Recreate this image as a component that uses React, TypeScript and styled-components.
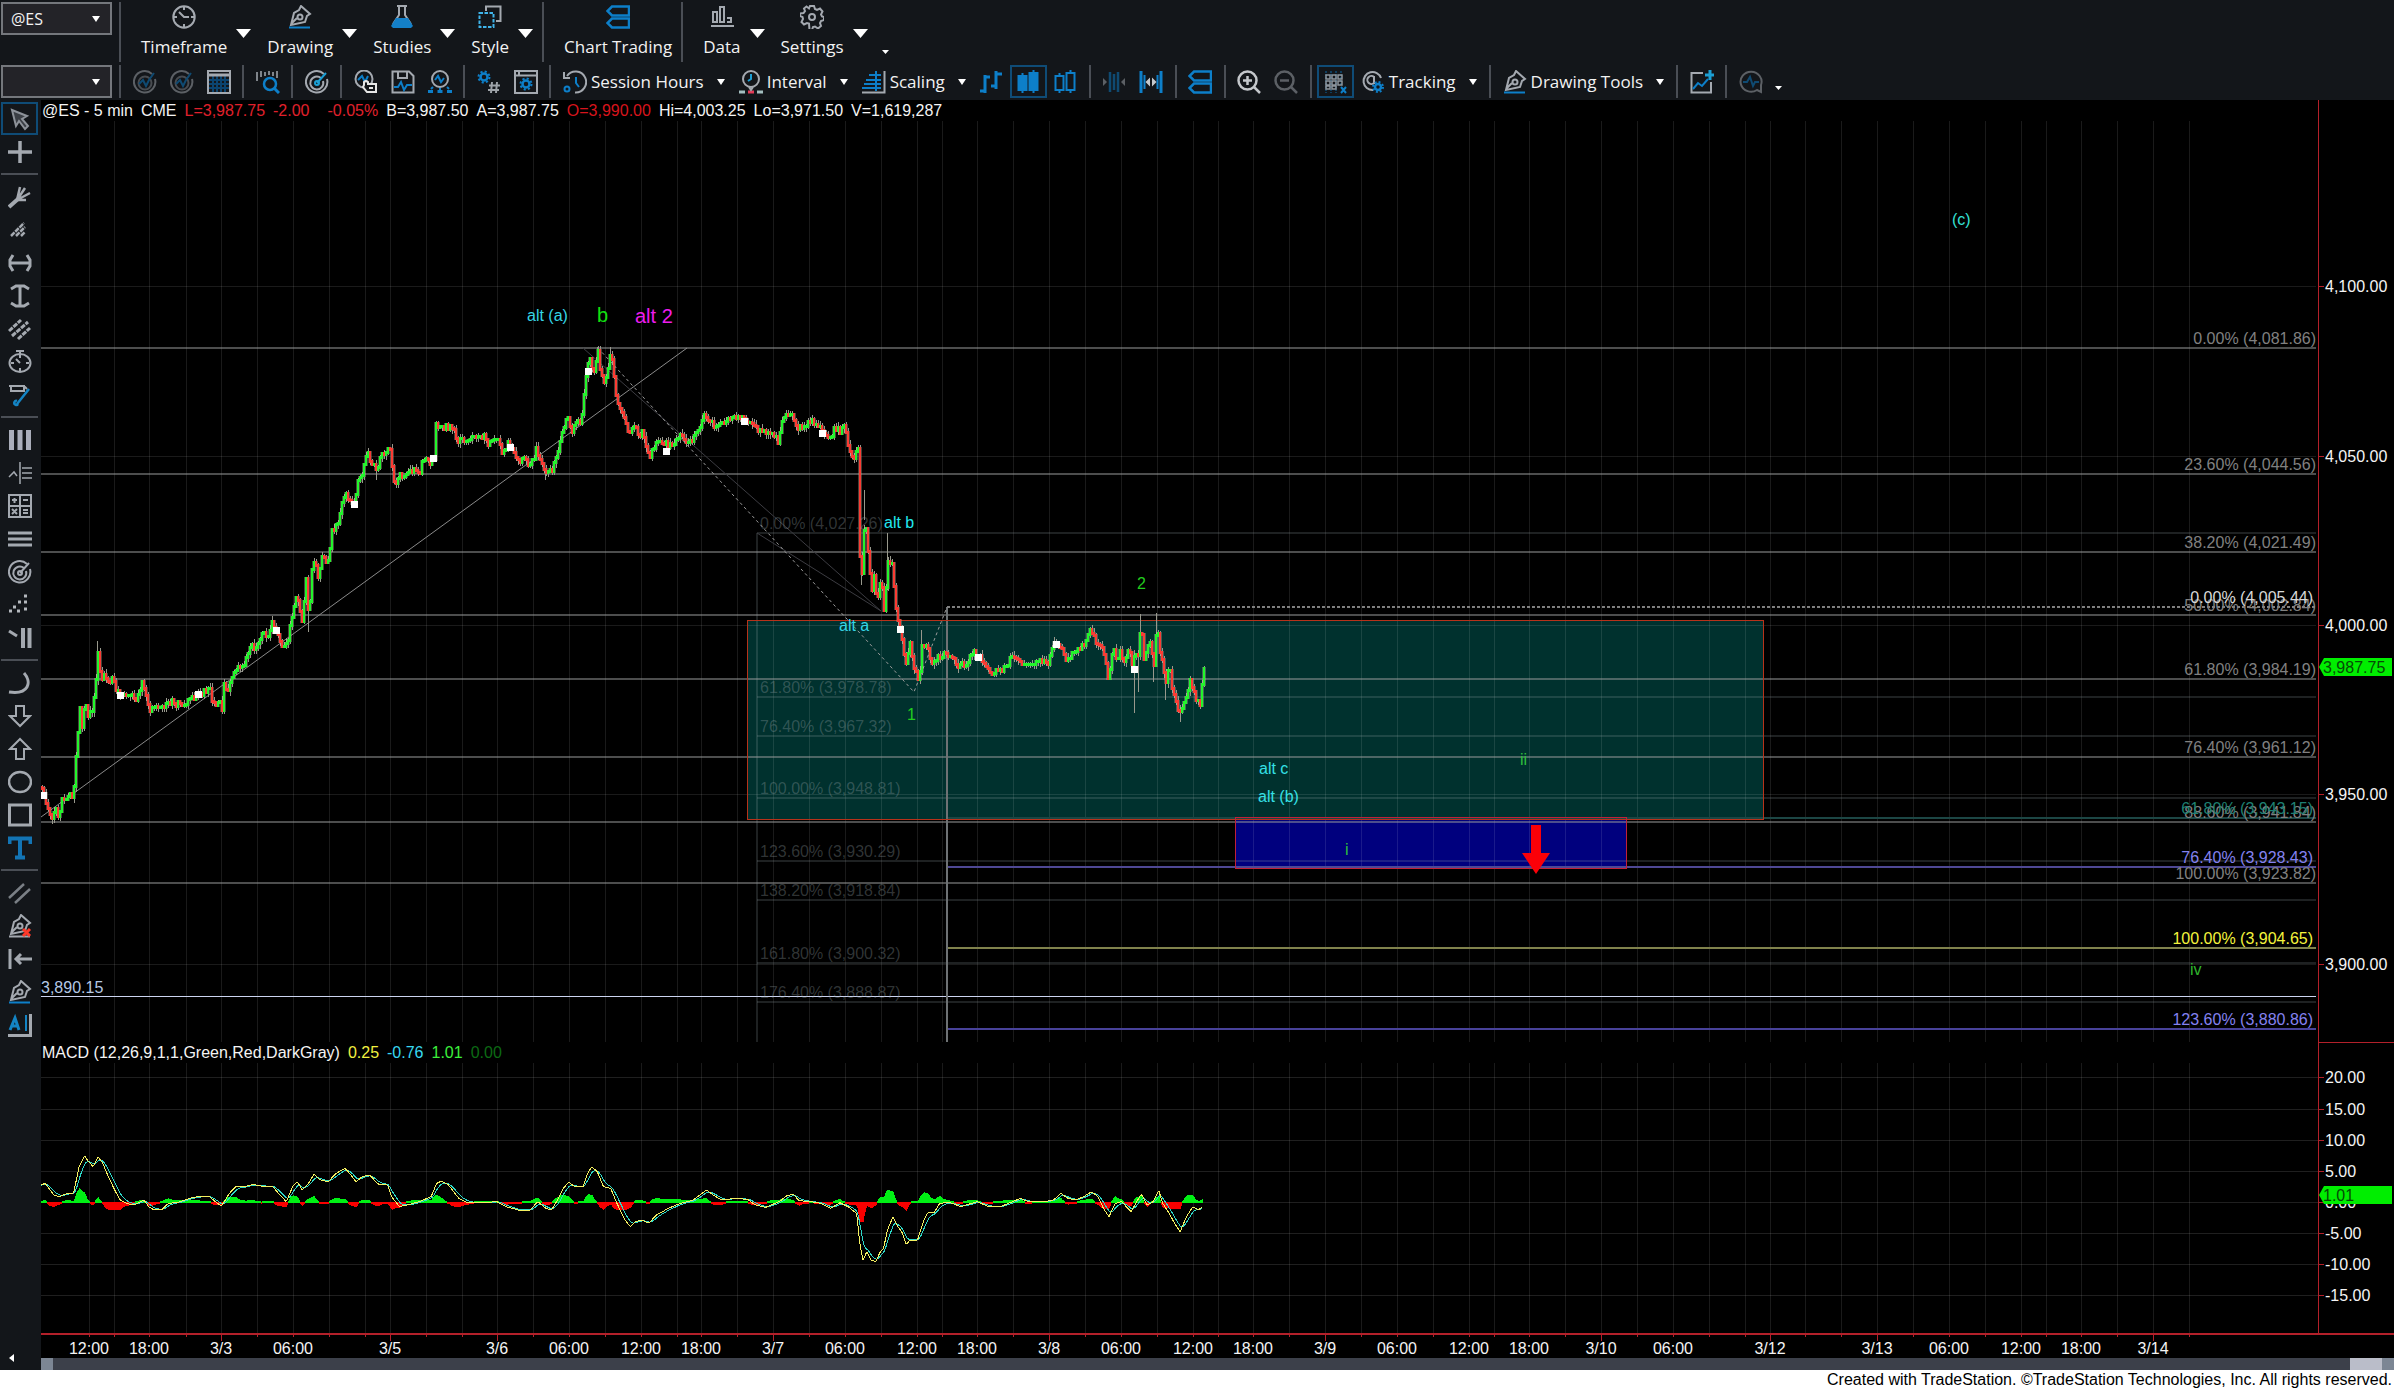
import React from "react";
import styled, { createGlobalStyle } from "styled-components";

const GlobalStyle = createGlobalStyle`
  *, *::before, *::after { box-sizing: border-box; }
  body { margin: 0; background: #13161a; }
  button, select { font: inherit; color: inherit; }
`;

const UI_FONT = '"Open Sans", "Noto Sans", sans-serif';
const CHART_FONT = '"Liberation Sans", Arial, sans-serif';
const BLUE = "#0d7fc9";
const GREY = "#a4a9b0";

/* ---------- layout ---------- */

const Page = styled.div`
  display: flex;
  flex-direction: column;
  min-height: 100vh;
  background: #13161a;
  color: #f2f2f2;
  font-family: ${UI_FONT};
`;

const Toolbars = styled.header`
  display: flex;
  flex-direction: column;
  gap: 3px;
  padding: 2px 1px;
`;

const ToolbarRow = styled.div<{ $h: number }>`
  display: flex;
  align-items: flex-start;
  height: ${(p) => p.$h}px;
  font-size: 17px;
  line-height: 24px;
  white-space: nowrap;
`;

const ComboBox = styled.label`
  display: grid;
  flex: none;
  width: 111px;
  height: 33px;
  margin-right: 2px;
  align-items: center;
  & > * { grid-area: 1 / 1; }
  & > svg { justify-self: end; margin-right: 12px; pointer-events: none; }
`;

const Separator = styled.span<{ $menu?: boolean }>`
  flex: none;
  align-self: stretch;
  width: 2px;
  margin: ${(p) => (p.$menu ? "0 12px 0 1px" : "0 5px")};
  background: #4a4e55;
  ${ComboBox} + & { margin-left: 5px; }
`;

const Select = styled.select`
  width: 100%;
  height: 100%;
  padding: 0 8px;
  appearance: none;
  border: 2px solid #74777c;
  border-radius: 0;
  background: #232328;
  font-size: 16px;
`;

const MenuButton = styled.button`
  display: flex;
  align-items: center;
  gap: 9px;
  height: 60px;
  padding: 0 8px;
  border: 0;
  background: none;
  & > svg { margin-top: 2px; }
`;

const MenuFace = styled.span`
  display: flex;
  flex-direction: column;
  align-items: center;
  justify-content: space-between;
  height: 54px;
`;

const IconButton = styled.button<{ $active?: boolean; $dim?: boolean }>`
  display: grid;
  place-items: center;
  flex: none;
  width: 37px;
  height: 33px;
  padding: 0;
  border: ${(p) => (p.$active ? "2px solid #0f4c77" : "0")};
  background: none;
  & > svg { opacity: ${(p) => (p.$dim ? 0.5 : 1)}; }
`;

const TextButton = styled.button`
  display: flex;
  align-items: center;
  height: 33px;
  padding: 0 7px;
  border: 0;
  background: none;
  & > span { margin: 0 13px 0 4px; }
`;

const Overflow = styled.button`
  align-self: flex-end;
  display: flex;
  padding: 8px 6px;
  border: 0;
  background: none;
`;

const Body = styled.div`
  display: grid;
  grid-template-columns: 41px minmax(0, 1fr);
  flex: 1;
`;

const Rail = styled.nav`
  display: flex;
  flex-direction: column;
  align-items: flex-start;
  padding: 2px 1px;
`;

const RailRule = styled.span`
  width: 37px;
  height: 2px;
  margin: 5px 0;
  background: #4a4e55;
`;

const RailCollapse = styled.button`
  display: flex;
  margin-top: auto;
  padding: 6px 8px;
  border: 0;
  background: none;
`;

const ChartArea = styled.main`
  display: grid;
  grid-template-columns: minmax(0, 1fr) 76px;
  align-content: start;
  background: #000;
  font-family: ${CHART_FONT};
  font-size: 16px;
  line-height: 21px;
`;

const InfoRow = styled.div`
  display: flex;
  gap: 8px;
  height: 21px;
  padding-left: 1px;
  white-space: pre;
`;

const Value = styled.span<{ $color?: string; $wide?: boolean }>`
  color: ${(p) => p.$color ?? "#f4f4f4"};
  padding-right: ${(p) => (p.$wide ? 10 : 0)}px;
`;

const AxisCell = styled.div<{ $top?: boolean }>`
  border-left: 1px solid #b3202a;
  border-top: ${(p) => (p.$top ? "1px solid #b3202a" : "0")};
`;

const Plot = styled.svg`
  display: block;
  width: 100%;
  height: auto;
  font-family: ${CHART_FONT};
  font-size: 16px;
`;

const TimeAxis = styled.div`
  grid-column: 1 / -1;
`;

const ScrollTrack = styled.div`
  grid-column: 1 / -1;
  display: flex;
  height: 12px;
  background: #3c404a;
`;

const ScrollPart = styled.span<{ $w: number; $bg: string; $end?: boolean }>`
  width: ${(p) => p.$w}px;
  background: ${(p) => p.$bg};
  margin-left: ${(p) => (p.$end ? "auto" : "0")};
`;

const Footer = styled.footer`
  height: 20px;
  padding-right: 2px;
  background: #fff;
  color: #000;
  font-family: ${CHART_FONT};
  font-size: 16px;
  line-height: 20px;
  text-align: right;
`;

/* ---------- icons ---------- */

type IconProps = { children: React.ReactNode; c?: string; w?: number };

const Icon = ({ children, c = GREY, w = 2 }: IconProps) => (
  <svg width="24" height="24" viewBox="0 0 24 24" fill="none" stroke={c} strokeWidth={w} aria-hidden="true">
    {children}
  </svg>
);

const Caret = ({ w = 9, h = 6 }: { w?: number; h?: number }) => (
  <svg width={w} height={h} viewBox="0 0 10 6" preserveAspectRatio="none" fill="#fff" aria-hidden="true">
    <path d="M0 0H10L5 6Z" />
  </svg>
);

const Gear = ({ cx, cy, r, c }: { cx: number; cy: number; r: number; c: string }) => (
  <g stroke={c}>
    <circle cx={cx} cy={cy} r={r} strokeWidth="2.5" />
    <circle cx={cx} cy={cy} r={r + 2} strokeWidth="2" strokeDasharray={`${(r + 2) * 0.39} ${(r + 2) * 0.395}`} />
  </g>
);

const ClockIcon = () => (
  <Icon>
    <circle cx="12" cy="12" r="10.700" />
    <path d="M7 7l5 5h5M12 2v3M12 19v3M2 12h3M19 12h3" />
  </Icon>
);

const PenIcon = ({ c = GREY, line = BLUE, mark }: { c?: string; line?: string; mark?: boolean }) => (
  <Icon c={c} w={2}>
    <path d="M13 1l9 8-3 2-2 6L3 20l3-12 5-3zM3 19l6-6" />
    <circle cx="12" cy="12" r="2.5" />
    <path d="M1 22.5H22" stroke={line} />
    {mark && <path d="M15 15l7 7M22 15l-7 7" stroke="#ff3a2a" strokeWidth="3" />}
  </Icon>
);

const FlaskIcon = () => (
  <Icon>
    <path d="M7 1h10M9 1v9L3 19M15 1v9l6 9" />
    <path d="M6 13h12l5 8-2 2H3l-2-2z" fill="#1480c8" stroke="none" />
  </Icon>
);

const StyleIcon = () => (
  <Icon>
    <path d="M8 6V1.5H22.500V16H18" />
    <rect x="1.500" y="8" width="14" height="14" stroke="#3fb4ea" strokeDasharray="3.500 1.500" />
  </Icon>
);

const TradeBarsIcon = () => (
  <Icon c={BLUE} w={2.5}>
    <path d="M23 1.500H6L1.500 6 6 10.500H23zM23 13.500H6L1.500 18 6 22.500H23z" />
  </Icon>
);

const DataIcon = () => (
  <Icon>
    <path d="M3 7h4v10H3zM10 2h4v15h-4zM17 13h4v4h-4M1 21h23" />
  </Icon>
);

const SettingsIcon = () => (
  <Icon w={2}>
    <circle cx="12" cy="12" r="3" />
    <path d="M10 1h4l1 3 2 1 3-1.500 2.500 3-1.500 3 1 2 2 .5v3l-3 1-1 2 1 3-3 2.500-3-2-2 .5-1 3H9.500L9 18.500 7 18l-3 1.500L1.500 17 3 14l-.5-2L0 11V8.500L3.500 8 5 6 4 3.500 6.500 1.500 9 3.500z" />
  </Icon>
);

const RadarIcon = ({ c = GREY }: { c?: string }) => (
  <Icon c={c}>
    <path d="M19 4A10.700 10.700 0 1 0 22 9" />
    <path d="M16 8a6.500 6.500 0 1 0 2 3" />
    <path d="M12 13L21 3" stroke={c === GREY ? "#1c9fd4" : c} />
    <circle cx="12" cy="13" r="2" stroke={c === GREY ? "#1c9fd4" : c} />
  </Icon>
);

const RadarPulseIcon = () => (
  <Icon>
    <path d="M19 4A10.700 10.700 0 1 0 22 9" />
    <circle cx="12" cy="13" r="6.500" stroke="#7d8288" />
    <path d="M6 14l4-4 3 6 3-6 5-7" stroke={BLUE} />
  </Icon>
);

const TableIcon = () => (
  <Icon>
    <path d="M6 6v16M10 6v16M14 6v16M18 6v16M2 10h20M2 14h20M2 18h20" stroke="#0b4470" />
    <rect x="1" y="1" width="22" height="22" />
    <path d="M1 5h22" strokeWidth="3" />
  </Icon>
);

const SearchBarsIcon = () => (
  <Icon>
    <path d="M1 2v9M5 1v6M9 2v4M13 1v4M17 2v4M21 1v7" strokeWidth="1.500" />
    <circle cx="14" cy="14" r="6" stroke={BLUE} strokeWidth="2.500" />
    <path d="M18 18l5 5" stroke={BLUE} strokeWidth="3" />
  </Icon>
);

const LockChartIcon = () => (
  <Icon>
    <circle cx="10" cy="9" r="8.500" />
    <path d="M4 10l4-4 3 6 3-6" stroke={BLUE} />
    <path d="M10 15v-3a3 3 0 0 1 4 0v2h8v8H13l-4-5z" stroke="#e6e6e6" fill="#13161a" />
    <path d="M15 18h4" stroke="#e6e6e6" />
  </Icon>
);

const SaveChartIcon = () => (
  <Icon>
    <path d="M1.500 22.500V1.500H18l4.500 4.500V22.500zM7 2v6h9V2" />
    <path d="M3 17h4l3-5 3 8 3-5h5" stroke={BLUE} />
  </Icon>
);

const ChartNodesIcon = () => (
  <Icon>
    <circle cx="12" cy="9" r="8" />
    <path d="M7 10l3-4 3 6 3-4M5 17l-2 2M12 18v3M19 17l2 2" stroke={BLUE} />
    <path d="M0 20h5v3H0zM9.500 20h5v3h-5zM19 20h5v3h-5z" fill={BLUE} stroke="none" />
  </Icon>
);

const GearHashIcon = () => (
  <Icon>
    <Gear cx={7} cy={7} r={3.5} c={BLUE} />
    <path d="M15 12l-1 11M20 12l-1 11M12 15.500h11M11 20h11" stroke="#9ea3a8" />
  </Icon>
);

const WindowGearIcon = () => (
  <Icon>
    <rect x="1" y="1" width="22" height="22" />
    <path d="M1 5.500h22M5 1v4" />
    <Gear cx={12} cy={14} r={3.5} c={BLUE} />
  </Icon>
);

const HistoryIcon = () => (
  <Icon>
    <path d="M4 6A10.500 10.500 0 1 1 12 22.500M1 2v6h6" />
    <path d="M13 7v6l3 4" stroke={BLUE} />
    <circle cx="4" cy="19" r="2.500" stroke={BLUE} />
  </Icon>
);

const IntervalIcon = () => (
  <Icon>
    <circle cx="12" cy="9" r="8" />
    <path d="M12 4v5l-3 2" stroke="#1c9fd4" />
    <path d="M0 22h6M18 22h6" stroke="#a4bfc0" strokeWidth="3" />
    <path d="M9 22h6" stroke="#e43b57" strokeWidth="3" />
    <path d="M10 17l2 3 2-3" />
  </Icon>
);

const ScalingIcon = () => (
  <Icon>
    <path d="M0 22.500H22.500V1" />
    <path d="M7 5h12M4 10h15M2 14h17M0 18h19M14 1v20" stroke={BLUE} />
  </Icon>
);

const OhlcIcon = () => (
  <Icon c={BLUE} w={3}>
    <path d="M6 5v18M6 7h5M1 21h5M17 1v18M17 4h6M12 16h5" />
  </Icon>
);

const CandlesIcon = ({ filled }: { filled?: boolean }) => (
  <Icon c={BLUE}>
    <path d="M6.500 3v3M6.500 20v3M17.500 0v4M17.500 20v3" />
    <rect x="2.500" y="6" width="8" height="14" fill={filled ? BLUE : "none"} />
    <rect x="13.500" y="3" width="8" height="17" fill={filled ? BLUE : "none"} />
  </Icon>
);

const SqueezeIcon = () => (
  <Icon>
    <path d="M8 2v20M12 4v16M16 2v20" stroke={BLUE} strokeWidth="2.500" />
    <path d="M1 8l4 4-4 4zM23 8l-4 4 4 4z" fill={GREY} stroke="none" />
  </Icon>
);

const SpreadIcon = () => (
  <Icon>
    <path d="M2 1v22M22 1v22" stroke={BLUE} strokeWidth="3" />
    <path d="M5.500 5v14M18.500 5v14" stroke={BLUE} />
    <path d="M11 7.500L6.500 12l4.500 4.500zM13 7.500l4.500 4.500-4.500 4.500z" fill="#c5c8cc" stroke="none" />
  </Icon>
);

const ZoomIcon = ({ plus }: { plus?: boolean }) => (
  <Icon w={2.5} c={plus ? "#c4c7cb" : GREY}>
    <circle cx="10.500" cy="10.500" r="9" />
    <path d={plus ? "M6 10.500h9M10.500 6v9" : "M6 10.500h9"} />
    <path d="M17 17l6 6" />
  </Icon>
);

const GridIcon = () => (
  <Icon c="#8e959c">
    <path d="M3 1v22M8 1v22M13 1v22M18 1v15" stroke="#0f4c77" strokeWidth="1.500" strokeDasharray="2 1" />
    <path d="M3 5h4v4H3zM9 5h4v4H9zM15 5h4v4h-4zM3 11h4v4H3zM9 11h4v4H9zM15 11h4v4h-4zM3 16h4v3H3zM9 16h4v3H9z" strokeWidth="1.500" />
    <path d="M18 17l5 6M23 17l-5 6" stroke={BLUE} />
  </Icon>
);

const TrackingIcon = () => (
  <Icon>
    <path d="M20 8A9 9 0 1 0 12 20M13 7a4 4 0 1 0 0 6M13 6v8M6 4a9 9 0 0 0-3 5" />
    <Gear cx={17} cy={17} r={3} c={BLUE} />
  </Icon>
);

const AddChartIcon = () => (
  <Icon>
    <path d="M13 3H1.500V22.500H21V12" />
    <path d="M3 19l5-6 4 3 6-7" stroke={BLUE} />
    <path d="M20 0v10M15 5h10" stroke="#1c9fd4" strokeWidth="3" />
  </Icon>
);

const BubbleIcon = () => (
  <Icon>
    <path d="M18 20a10.500 10 0 1 1 4-5v7z" />
    <path d="M4 12h4l3-5 3 9 2-4h4" stroke={BLUE} />
  </Icon>
);

const railGroups: { name: string; active?: boolean; icon: React.ReactNode }[][] = [
  [
    { name: "Pointer", active: true, icon: <Icon c="#8d9299"><path d="M4 3l15 6-5 3 6 7-3 3-6-8-3 5z" fill="#3b3f45" /></Icon> },
    { name: "Crosshair", icon: <Icon w={3.5}><path d="M12 1v22M0 12h24" /></Icon> },
  ],
  [
    { name: "Pitchfork", icon: <Icon w={2.5}><path d="M1 22l9-8" strokeWidth="4" /><path d="M9 15l3-13M9 15l8-12M9 15l13-7M9 15h9" /></Icon> },
    { name: "Fan", icon: <Icon w={2.5}><path d="M3 18L16 5M8 18l9-9M13 18l4-4" strokeDasharray="5 1" /></Icon> },
    { name: "Horizontal range", icon: <Icon w={3}><path d="M5 4L2 9v6l3 5M19 4l3 5v6l-3 5M3 12h18" /></Icon> },
    { name: "Vertical range", icon: <Icon w={3}><path d="M3 5l5-3h8l5 3M3 19l5 3h8l5-3M12 3v18" /></Icon> },
    { name: "Channel", icon: <Icon w={3}><path d="M1 14L13 3M4 19L20 5M10 22l12-11" strokeDasharray="5 1" /></Icon> },
    { name: "Time cycle", icon: <Icon><ellipse cx="12" cy="13" rx="10.500" ry="9" /><path d="M8 1h8M12 1v3M8 9l4 4M12 5v3M12 18v3M3 13h3M18 13h3" /></Icon> },
    { name: "Marker", icon: <Icon><path d="M1 3h15v5H3V3M16 3l3 3" /><path d="M21 6L9 21M9 18a2 2 0 1 0 1 3" stroke="#1484c4" strokeWidth="2.500" /></Icon> },
  ],
  [
    { name: "Vertical lines", icon: <Icon w={5} c="#a9adba"><path d="M3.500 2v20M12 2v20M20.500 2v20" /></Icon> },
    { name: "Wave counts", icon: <Icon><path d="M1 16l5-5 3 4M12 1v22M14 7h10M14 12h10M14 17h10" strokeWidth="1.500" /></Icon> },
    { name: "Calculator", icon: <Icon><path d="M1 1h22v22H1zM12 1v22M1 12h22M4 6h5M6.500 4v5M15 6h5M4 15l5 5M9 15l-5 5M15 16h5M15 19h5" /></Icon> },
    { name: "Horizontal lines", icon: <Icon w={3}><path d="M0 6h24M0 12h24M0 18h24" /></Icon> },
    { name: "Radar", icon: <RadarIcon c="#a4a9b1" /> },
    { name: "Dots", icon: <Icon w={3} c="#b4b8bd"><path d="M16 3h3M10 9h3M16 9h3M5 14h3M1 18h3M9 18h3M16 16h3" /></Icon> },
    { name: "Trend bars", icon: <Icon w={4}><path d="M1 5l8 5" strokeWidth="3" /><path d="M15 2v20M21.500 2v20" /></Icon> },
  ],
  [
    { name: "Arc", icon: <Icon w={3}><path d="M16 2c8 9 5 22-15 19" /></Icon> },
    { name: "Arrow down", icon: <Icon><path d="M8 2h8v10h6L12 22 2 12h6z" /></Icon> },
    { name: "Arrow up", icon: <Icon><path d="M8 22h8V12h6L12 2 2 12h6z" /></Icon> },
    { name: "Ellipse", icon: <Icon w={2.5}><ellipse cx="12" cy="12" rx="11" ry="10" /></Icon> },
    { name: "Rectangle", icon: <Icon w={3}><rect x="1.500" y="2" width="21" height="20" /></Icon> },
    { name: "Text", icon: <Icon c="#1374b4" w={3}><path d="M1.500 8V2.500h21V8M12 3v18M7 21.500h10" strokeWidth="4" /></Icon> },
  ],
  [
    { name: "Parallel lines", icon: <Icon c="#7a7f85"><path d="M1 17L16 3M7 22L22 8" strokeWidth="2.500" /></Icon> },
    { name: "Delete drawing", icon: <PenIcon line={GREY} mark /> },
    { name: "Extend left", icon: <Icon w={3}><path d="M2 2v20M8 12h16M13 7l-5 5 5 5" /></Icon> },
    { name: "Edit drawing", icon: <PenIcon /> },
    { name: "Text label", icon: <Icon c="#1484c4" w={3}><path d="M2 17L7 5l4 12M4 13h6" /><path d="M18 2v16" strokeWidth="2" /><path d="M0 22.500H22.500V1" stroke={GREY} /></Icon> },
  ],
];

/* ---------- chart data ---------- */

type Pt = [number, number];

const pairs = (s: string): Pt[] => s.trim().split(/\s+/).map((p) => p.split(",").map(Number) as Pt);

const priceToY = (p: number) => Math.round(625 + (4000 - p) * 3.388);

const priceTrack = pairs(`
41,787 46,805 51,817 55,808 58,819 61,798 64,803 68,792 72,800 75,755 79,709 81,728 84,701 87,716 91,712 94,691 97,651
100,680 104,671 107,684 112,675 115,689 120,696 126,696 130,691 134,701 138,692 141,684 145,696 149,710 154,707 159,710
166,703 171,701 181,705 189,698 196,695 204,691 209,685 212,705 217,700 221,707 223,682 227,692 231,676 237,664 242,666
246,653 251,644 256,650 260,634 268,634 271,619 276,634 280,644 286,644 291,616 296,594 301,623 305,580 308,623 310,584
312,555 317,575 321,559 327,560 331,530 337,523 341,501 344,492 348,503 354,501 357,480 362,471 367,450 371,466 376,467
380,455 385,450 389,447 390,459 392,475 394,482 398,475 403,476 408,469 414,471 418,475 422,457 428,462 433,457 435,421
438,426 444,427 452,428 456,439 464,439 474,438 485,437 488,444 494,435 500,448 502,455 508,441 513,455 518,462 523,460
530,465 535,450 540,459 545,475 551,469 556,457 561,434 566,416 571,430 577,419 580,423 584,384 588,355 593,373 597,353
600,375 604,382 610,353 614,387 617,405 622,412 628,434 634,426 638,435 642,428 645,448 648,457 652,446 658,442 663,442
668,446 673,442 680,435 685,439 691,441 698,428 704,414 709,423 714,426 720,422 730,418 740,417 745,420 753,425 760,433
768,432 777,441 781,421 788,412 792,417 797,428 805,425 812,421 817,427 822,433 827,440 834,428 839,430 843,425 848,449
853,456 856,447 858,452 859,553 861,571 864,512 867,553 871,588 873,577 876,601 880,575 883,608 887,564 891,566 895,610
900,629 904,664 909,644 913,666 918,679 921,647 926,642 930,662 935,657 940,655 947,654 952,655 957,666 965,664 972,651
978,657 983,662 989,673 1001,670 1011,657 1021,662 1034,664 1039,660 1047,662 1052,644 1057,642 1061,649 1065,662
1072,651 1077,650 1084,642 1089,627 1094,640 1102,647 1107,679 1112,649 1116,662 1119,649 1123,662 1127,647 1131,662
1134,651 1137,657 1140,623 1143,657 1149,642 1153,666 1156,621 1159,649 1163,670 1165,683 1168,666 1172,692 1178,714
1184,701 1189,679 1195,699 1199,707 1201,683 1203,666`);

const longWicks: [number, number, number][] = [
  [97, 641, 655], [308, 600, 632], [376, 466, 480], [864, 490, 520], [861, 560, 585], [887, 533, 570],
  [887, 560, 590], [921, 630, 660], [1134, 650, 713], [1138, 650, 692], [1140, 614, 630], [1156, 613, 640],
  [1153, 660, 682], [1165, 680, 700], [1180, 705, 722], [545, 470, 480], [597, 347, 360], [610, 347, 362],
];

const random = (seed: number) => () => {
  seed = (seed * 1103515245 + 12345) % 2147483648;
  return seed / 2147483648;
};

const valueAt = (pts: Pt[], x: number) => {
  let i = 1;
  while (i < pts.length - 1 && pts[i][0] < x) i++;
  const [x0, y0] = pts[i - 1];
  const [x1, y1] = pts[i];
  return y0 + ((y1 - y0) * (x - x0)) / (x1 - x0 || 1);
};

const candles = (() => {
  const rnd = random(11);
  const out = { up: "", down: "", wick: "" };
  let prev = 787;
  for (let x = 41; x <= 1203; x += 2) {
    const mid = valueAt(priceTrack, x);
    const close = Math.round(mid + (rnd() - 0.5) * 6);
    const top = Math.min(prev, close);
    const bottom = Math.max(prev, close) + 1;
    out.wick += `M${x + 1} ${top - Math.round(rnd() * 5)}V${bottom + Math.round(rnd() * 5)}`;
    out[close <= prev ? "up" : "down"] += `M${x + 1} ${top - 1}V${bottom + 1}`;
    prev = close;
  }
  longWicks.forEach(([x, a, b]) => (out.wick += `M${x} ${a}V${b}`));
  return out;
})();

const sessionMarks = pairs(`43,795 120,695 198,694 276,630 354,504 433,458 510,447 588,371 666,451 744,421 822,433
900,629 978,657 1056,644 1134,669`);

const MACD_STEP = 0.791;
const macdTrack = pairs(`
52,465 57,460 68,495 75,500 85,490 93,490 100,410 107,378 112,395 118,410 124,380 130,400 137,440 145,480 152,510
162,522 172,522 182,510 188,530 195,540 205,538 213,520 225,517 240,505 250,500 265,500 272,515 280,528 290,490 298,470
310,470 320,463 330,468 345,470 352,490 362,515 370,470 376,455 382,480 390,460 397,433 405,450 415,455 425,430 436,415
442,430 450,455 458,440 467,435 478,462 490,465 495,500 505,530 515,525 530,515 545,500 552,460 558,453 567,465 580,505
590,517 610,518 628,515 640,530 655,540 670,540 680,515 690,535 697,540 705,510 712,475 719,457 727,470 737,470 743,430
748,410 755,425 763,470 772,475 780,520 790,570 797,590 803,575 812,570 820,580 830,555 845,535 860,520 875,512 885,495
893,480 903,497 912,510 930,505 945,508 955,525 968,532 985,515 995,497 1003,493 1010,512 1025,515 1038,520 1050,535
1062,518 1072,530 1083,550 1087,640 1091,690 1096,665 1101,690 1107,695 1113,665 1117,655 1122,600 1129,560 1135,590
1140,605 1146,645 1150,630 1160,630 1168,570 1173,548 1181,548 1188,520 1200,517 1215,530 1235,515 1250,530 1265,530
1280,515 1290,505 1300,515 1320,515 1332,510 1341,490 1350,505 1360,510 1370,500 1380,485 1388,500 1395,535 1402,560
1410,520 1418,515 1430,545 1437,515 1443,492 1450,525 1458,515 1465,482 1470,520 1478,550 1485,580 1492,605 1500,560
1508,530 1515,540 1520,530`).map(([t, v]) => [t * MACD_STEP, 1030 + v / 3] as Pt);

const MACD_ZERO = 1202;
const macd = (() => {
  let signal = valueAt(macdTrack, 41);
  let fast = "", slow = "", pos = "", neg = "";
  for (let x = 41; x <= 1202; x += 1) {
    const v = valueAt(macdTrack, x);
    signal += (v - signal) * 0.22;
    const cmd = x === 41 ? "M" : "L";
    fast += `${cmd}${x} ${v.toFixed(1)}`;
    slow += `${cmd}${x} ${signal.toFixed(1)}`;
    const bar = Math.round(signal - v);
    if (bar >= 0) pos += `M${x} ${MACD_ZERO + 1}V${MACD_ZERO - 1 - bar}`;
    else neg += `M${x} ${MACD_ZERO}V${MACD_ZERO + 1 - bar}`;
  }
  return { fast, slow, pos, neg };
})();

const timeTicks: [number, string?][] = [
  [89, "12:00"], [114], [149, "18:00"], [186], [221, "3/3"], [257], [293, "06:00"], [329], [365], [390, "3/5"], [426],
  [462], [497, "3/6"], [533], [569, "06:00"], [605], [641, "12:00"], [677], [701, "18:00"], [737], [773, "3/7"], [809],
  [845, "06:00"], [881], [917, "12:00"], [942], [977, "18:00"], [1013], [1049, "3/8"], [1085], [1121, "06:00"], [1157],
  [1193, "12:00"], [1218], [1253, "18:00"], [1289], [1325, "3/9"], [1361], [1397, "06:00"], [1433], [1469, "12:00"],
  [1494], [1529, "18:00"], [1565], [1601, "3/10"], [1637], [1673, "06:00"], [1709], [1745], [1770, "3/12"], [1805],
  [1841], [1877, "3/13"], [1913], [1949, "06:00"], [1985], [2021, "12:00"], [2046], [2081, "18:00"], [2117],
  [2153, "3/14"], [2189],
];

const mainFib: [string, number][] = [
  ["0.00% (4,081.86)", 4081.86], ["23.60% (4,044.56)", 4044.56], ["38.20% (4,021.49)", 4021.49],
  ["50.00% (4,002.84)", 4002.84], ["61.80% (3,984.19)", 3984.19], ["76.40% (3,961.12)", 3961.12],
  ["88.60% (3,941.84)", 3941.84], ["100.00% (3,923.82)", 3923.82],
];

const faintFib: [string, number][] = [
  ["0.00% (4,027.26)", 4027.26], ["61.80% (3,978.78)", 3978.78], ["76.40% (3,967.32)", 3967.32],
  ["100.00% (3,948.81)", 3948.81], ["123.60% (3,930.29)", 3930.29], ["138.20% (3,918.84)", 3918.84],
  ["161.80% (3,900.32)", 3900.32], ["176.40% (3,888.87)", 3888.87],
];

const extension: [string, number, string, string][] = [
  ["61.80% (3,943.15)", 3943.15, "#1f8073", "#1c4644"],
  ["76.40% (3,928.43)", 3928.43, "#8482f0", "#4e4894"],
  ["100.00% (3,904.65)", 3904.65, "#f4f43c", "#80824c"],
  ["123.60% (3,880.86)", 3880.86, "#8482f0", "#48429a"],
];

const waves: [string, number, number, string, number][] = [
  ["alt (a)", 527, 321, "#35d6e6", 16], ["b", 597, 322, "#10e010", 20], ["alt 2", 635, 323, "#ee1cee", 20],
  ["(c)", 1952, 225, "#35e0d6", 16], ["alt b", 884, 528, "#22e8f0", 16], ["alt a", 839, 631, "#35d6e6", 16],
  ["2", 1137, 589, "#22cc1e", 16], ["1", 907, 720, "#22cc1e", 16], ["alt c", 1259, 774, "#35e0e6", 16],
  ["alt (b)", 1258, 802, "#35e0e6", 16], ["i", 1345, 855, "#2fbf3c", 16], ["ii", 1520, 765, "#2fbf3c", 16],
  ["iv", 2190, 975, "#2fb52c", 16],
];

const VLines = ({ y1, y2 }: { y1: number; y2: number }) => (
  <path d={timeTicks.map(([x]) => `M${x} ${y1}V${y2}`).join("")} stroke="#fff" strokeOpacity="0.1" />
);

const PricePlot = () => (
  <Plot viewBox="41 121 2277 921" role="img" aria-label="@ES 5 minute price chart">
    <g shapeRendering="crispEdges">
      <rect x="747" y="620" width="1016" height="199" fill="#00312e" />
      <rect x="1235" y="817" width="392" height="52" fill="#00007e" />
      <VLines y1={121} y2={1042} />
      <path d={[4100, 4050, 4000, 3950, 3900].map((p) => `M41 ${priceToY(p)}H2316`).join("")} stroke="#fff" strokeOpacity="0.1" />
      {faintFib.map(([t, p]) => (
        <path key={t} d={`M757 ${priceToY(p)}H2316`} stroke="#98a4a8" strokeOpacity="0.2" strokeWidth="2" />
      ))}
      <path d="M757 533V1042" stroke="#98a4a8" strokeOpacity="0.2" strokeWidth="2" />
      {mainFib.map(([t, p]) => (
        <path key={t} d={`M41 ${priceToY(p)}H2316`} stroke="#9a9c9c" strokeOpacity="0.5" strokeWidth="2" />
      ))}
      {extension.map(([t, p, , c]) => (
        <path key={t} d={`M947 ${priceToY(p)}H2316`} stroke={c} strokeWidth="2" />
      ))}
      <path d="M41 996.500H2316" stroke="#ccd4f0" />
      <path d="M947 607V1042" stroke="#6e7274" strokeWidth="2" />
      <path d="M947 607H2316" stroke="#808080" strokeWidth="2" strokeDasharray="3 2" />
      <rect x="747.5" y="620.5" width="1016" height="199" fill="none" stroke="#b8321a" />
      <rect x="1235.5" y="817.500" width="391" height="51" fill="none" stroke="#c0203a" />
    </g>
    <g fill="none">
      <path d="M41 817L687 348" stroke="#8a8a8a" />
      <path d="M583 348L881 611M757 533L881 611" stroke="#3c3c42" />
      <path d="M598 348L914 692L947 607" stroke="#9c9c9c" strokeDasharray="3 3" />
    </g>
    <g fill="none" shapeRendering="crispEdges">
      <path d={candles.wick} stroke="#98988c" />
      <path d={candles.down} stroke="#c8b8a0" strokeOpacity="0.35" strokeWidth="4" />
      <path d={candles.up} stroke="#c8c8a0" strokeOpacity="0.35" strokeWidth="4" />
      <path d={candles.down} stroke="#fa3c34" strokeWidth="2" />
      <path d={candles.up} stroke="#22f52c" strokeWidth="2" />
    </g>
    {sessionMarks.map(([x, y]) => (
      <rect key={x} x={x - 3} y={y - 3} width="7" height="7" fill="#fff" />
    ))}
    <path d="M1531 825h10v28h9l-14 21-14-21h9z" fill="#fb0008" />
    {faintFib.map(([t, p]) => (
      <text key={t} x="760" y={priceToY(p) - 4} fill="#98a4a8" fillOpacity="0.33">{t}</text>
    ))}
    <g textAnchor="end">
      {mainFib.map(([t, p]) => (
        <text key={t} x="2316" y={priceToY(p) - 4} fill="#808080">{t}</text>
      ))}
      {extension.map(([t, p, c]) => (
        <text key={t} x="2313" y={priceToY(p) - 4} fill={c}>{t}</text>
      ))}
      <text x="2313" y="603" fill="#d8d8d8">0.00% (4,005.44)</text>
    </g>
    <text x="41" y="993" fill="#b4c8e4">3,890.15</text>
    {waves.map(([t, x, y, c, s]) => (
      <text key={t} x={x} y={y} fill={c} fontSize={s}>{t}</text>
    ))}
  </Plot>
);

const Badge = ({ y, label, x = 2319 }: { y: number; label: string; x?: number }) => (
  <g>
    <path d={`M${x} ${y}l5 -9H2392v18H${x + 5}z`} fill="#00ee00" />
    <text x={x + 4} y={y + 6} fill="#064a06">{label}</text>
  </g>
);

const PriceAxis = () => (
  <Plot viewBox="2319 121 75 921" role="img" aria-label="Price scale">
    {[4100, 4050, 4000, 3950, 3900].map((p) => (
      <g key={p}>
        <path d={`M2319 ${priceToY(p)}.500h5`} stroke="#b3202a" />
        <text x="2325" y={priceToY(p) + 6} fill="#f4f4f4">{`${p.toLocaleString("en-US")}.00`}</text>
      </g>
    ))}
    <Badge y={667} label="3,987.75" />
  </Plot>
);

const macdLevels: [number, string][] = [
  [1077, "20.00"], [1109, "15.00"], [1140, "10.00"], [1171, "5.00"], [1202, "0.00"], [1233, "-5.00"],
  [1264, "-10.00"], [1295, "-15.00"],
];

const MacdPlot = () => (
  <Plot viewBox="41 1063 2277 270" role="img" aria-label="MACD">
    <g shapeRendering="crispEdges" fill="none">
      <VLines y1={1063} y2={1333} />
      <path d={macdLevels.map(([y]) => `M41 ${y}H2318`).join("")} stroke="#fff" strokeOpacity="0.12" />
      <path d={macd.pos} stroke="#00f014" />
      <path d={macd.neg} stroke="#f80000" />
      <path d={macd.slow} stroke="#2cd8c8" />
      <path d={macd.fast} stroke="#f4f060" />
    </g>
  </Plot>
);

const MacdAxis = () => (
  <Plot viewBox="2319 1063 75 270" role="img" aria-label="MACD scale">
    {macdLevels.map(([y, t]) => (
      <g key={t}>
        <path d={`M2319 ${y}.500h5`} stroke="#b3202a" />
        <text x="2325" y={y + 6} fill="#f4f4f4">{t}</text>
      </g>
    ))}
    <Badge y={1195} label="1.01" />
  </Plot>
);

const TimeScale = () => (
  <Plot viewBox="41 1333 2353 25" role="img" aria-label="Time scale">
    <path d="M41 1334H2394" stroke="#b3202a" strokeWidth="2" />
    {timeTicks.map(([x, t]) => (
      <g key={x}>
        <path d={`M${x}.500 1334V${t?.includes("/") ? 1341 : 1337}`} stroke="#b3202a" />
        {t && <text x={x} y="1354" textAnchor="middle" fill="#f4f4f4">{t}</text>}
      </g>
    ))}
  </Plot>
);

/* ---------- toolbar pieces ---------- */

const Combo = ({ label, value }: { label: string; value: string }) => (
  <ComboBox>
    <Select aria-label={label} defaultValue={value}>
      <option value={value}>{value}</option>
    </Select>
    <Caret w={8} />
  </ComboBox>
);

const Menu = ({ label, icon, plain }: { label: string; icon: React.ReactNode; plain?: boolean }) => (
  <MenuButton>
    <MenuFace>{icon}{label}</MenuFace>
    {!plain && <Caret w={15} h={9} />}
  </MenuButton>
);

const Tool = ({ name, icon, active, dim }: { name: string; icon: React.ReactNode; active?: boolean; dim?: boolean }) => (
  <IconButton aria-label={name} $active={active} $dim={dim}>{icon}</IconButton>
);

const TextTool = ({ label, icon }: { label: string; icon: React.ReactNode }) => (
  <TextButton>
    {icon}
    <span>{label}</span>
    <Caret w={8} />
  </TextButton>
);

export default function App() {
  return (
    <Page>
      <GlobalStyle />
      <Toolbars>
        <ToolbarRow $h={60}>
          <Combo label="Symbol" value="@ES" />
          <Separator $menu />
          <Menu label="Timeframe" icon={<ClockIcon />} />
          <Menu label="Drawing" icon={<PenIcon />} />
          <Menu label="Studies" icon={<FlaskIcon />} />
          <Menu label="Style" icon={<StyleIcon />} />
          <Separator $menu />
          <Menu label="Chart Trading" icon={<TradeBarsIcon />} plain />
          <Separator $menu />
          <Menu label="Data" icon={<DataIcon />} />
          <Menu label="Settings" icon={<SettingsIcon />} />
          <Overflow aria-label="More menus"><Caret w={7} h={4} /></Overflow>
        </ToolbarRow>
        <ToolbarRow $h={33}>
          <Combo label="Account" value="" />
          <Separator />
          <Tool name="Radar scan" icon={<RadarPulseIcon />} dim />
          <Tool name="Radar target" icon={<RadarPulseIcon />} dim />
          <Tool name="Data table" icon={<TableIcon />} />
          <Separator />
          <Tool name="Symbol search" icon={<SearchBarsIcon />} />
          <Separator />
          <Tool name="Radar" icon={<RadarIcon />} />
          <Separator />
          <Tool name="Lock chart" icon={<LockChartIcon />} />
          <Tool name="Save chart" icon={<SaveChartIcon />} />
          <Tool name="Chart group" icon={<ChartNodesIcon />} />
          <Separator />
          <Tool name="Number format" icon={<GearHashIcon />} />
          <Tool name="Window settings" icon={<WindowGearIcon />} />
          <Separator />
          <TextTool label="Session Hours" icon={<HistoryIcon />} />
          <TextTool label="Interval" icon={<IntervalIcon />} />
          <TextTool label="Scaling" icon={<ScalingIcon />} />
          <Tool name="OHLC bars" icon={<OhlcIcon />} />
          <Tool name="Candlesticks" icon={<CandlesIcon filled />} active />
          <Tool name="Hollow candlesticks" icon={<CandlesIcon />} />
          <Separator />
          <Tool name="Decrease spacing" icon={<SqueezeIcon />} dim />
          <Tool name="Increase spacing" icon={<SpreadIcon />} />
          <Separator />
          <Tool name="Chart trading" icon={<TradeBarsIcon />} />
          <Separator />
          <Tool name="Zoom in" icon={<ZoomIcon plus />} />
          <Tool name="Zoom out" icon={<ZoomIcon />} dim />
          <Separator />
          <Tool name="Grid" icon={<GridIcon />} active />
          <TextTool label="Tracking" icon={<TrackingIcon />} />
          <Separator />
          <TextTool label="Drawing Tools" icon={<PenIcon />} />
          <Separator />
          <Tool name="Add chart" icon={<AddChartIcon />} />
          <Separator />
          <Tool name="Commentary" icon={<BubbleIcon />} dim />
          <Overflow aria-label="More tools"><Caret w={7} h={4} /></Overflow>
        </ToolbarRow>
      </Toolbars>

      <Body>
        <Rail aria-label="Drawing tools">
          {railGroups.map((group, i) => (
            <React.Fragment key={i}>
              {i > 0 && <RailRule />}
              {group.map((t) => <Tool key={t.name} {...t} />)}
            </React.Fragment>
          ))}
          <RailCollapse aria-label="Collapse">
            <svg width="5" height="8" viewBox="0 0 5 8" fill="#fff" aria-hidden="true"><path d="M5 0V8L0 4Z" /></svg>
          </RailCollapse>
        </Rail>
        <ChartArea>
          <InfoRow>
            <Value>@ES - 5 min</Value>
            <Value>CME</Value>
            <Value $color="#e0202c">L=3,987.75</Value>
            <Value $color="#e0202c" $wide>-2.00</Value>
            <Value $color="#e0202c">-0.05%</Value>
            <Value>B=3,987.50</Value>
            <Value>A=3,987.75</Value>
            <Value $color="#d8141c">O=3,990.00</Value>
            <Value>Hi=4,003.25</Value>
            <Value>Lo=3,971.50</Value>
            <Value>V=1,619,287</Value>
          </InfoRow>
          <AxisCell />
          <PricePlot />
          <AxisCell><PriceAxis /></AxisCell>
          <InfoRow>
            <Value>MACD (12,26,9,1,1,Green,Red,DarkGray)</Value>
            <Value $color="#f0f040">0.25</Value>
            <Value $color="#38d8f0">-0.76</Value>
            <Value $color="#3cf03c">1.01</Value>
            <Value $color="#0c6a14">0.00</Value>
          </InfoRow>
          <AxisCell $top />
          <MacdPlot />
          <AxisCell><MacdAxis /></AxisCell>
          <TimeAxis><TimeScale /></TimeAxis>
          <ScrollTrack>
            <ScrollPart $w={12} $bg="#7c8694" />
            <ScrollPart $w={32} $bg="#babdc9" $end />
            <ScrollPart $w={12} $bg="#7c8694" />
          </ScrollTrack>
        </ChartArea>
      </Body>
      <Footer>Created with TradeStation. ©TradeStation Technologies, Inc. All rights reserved.</Footer>
    </Page>
  );
}
